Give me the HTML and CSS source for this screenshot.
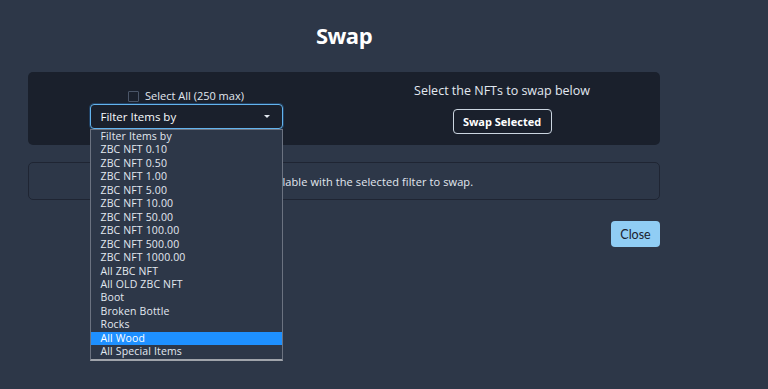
FILE: index.html
```html
<!DOCTYPE html>
<html lang="en">
<head>
    <meta charset="UTF-8">
    <meta name="viewport" content="width=device-width, initial-scale=1.0">
    <title>Swap</title>
    <link rel="stylesheet" href="styles.css">
</head>
<body>
    <div class="modal">
        <h1 class="title">Swap</h1>

        <div class="panel">
            <div class="col">
                <label class="select-all">
                    <span class="checkbox"></span>
                    Select All (250 max)
                </label>
                <div class="filter">
                    <div class="filter-box">
                        <span>Filter Items by</span>
                        <span class="caret"></span>
                    </div>
                    <ul class="filter-list">
                        <li>Filter Items by</li>
                        <li>ZBC NFT 0.10</li>
                        <li>ZBC NFT 0.50</li>
                        <li>ZBC NFT 1.00</li>
                        <li>ZBC NFT 5.00</li>
                        <li>ZBC NFT 10.00</li>
                        <li>ZBC NFT 50.00</li>
                        <li>ZBC NFT 100.00</li>
                        <li>ZBC NFT 500.00</li>
                        <li>ZBC NFT 1000.00</li>
                        <li>All ZBC NFT</li>
                        <li>All OLD ZBC NFT</li>
                        <li>Boot</li>
                        <li>Broken Bottle</li>
                        <li>Rocks</li>
                        <li class="active">All Wood</li>
                        <li>All Special Items</li>
                    </ul>
                </div>
            </div>
            <div class="col">
                <p class="hint">Select the NFTs to swap below</p>
                <button class="btn-outline">Swap Selected</button>
            </div>
        </div>

        <div class="notice">
            No NFTs available with the selected filter to swap.
        </div>

        <div class="footer">
            <button class="btn-close">Close</button>
        </div>
    </div>
</body>
</html>
```

FILE: styles.css
```css
* {
    margin: 0;
    padding: 0;
    box-sizing: border-box;
}

body {
    font-family: 'Open Sans', 'Noto Sans', sans-serif;
    background: #2d3748;
    color: #e2e8f0;
    min-height: 100vh;
}

.modal {
    width: 632px;
    margin-left: 28px;
    padding-top: 20px;
}

.title {
    text-align: center;
    font-size: 22px;
    font-weight: 700;
    color: #fff;
    line-height: 30px;
    margin-bottom: 22px;
    letter-spacing: -0.5px;
}

.panel {
    background: #1a202c;
    border-radius: 5px;
    display: grid;
    grid-template-columns: 1fr 1fr;
    align-items: center;
    height: 73px;
}

.col {
    display: flex;
    flex-direction: column;
    align-items: center;
}

.select-all {
    display: flex;
    align-items: center;
    gap: 6px;
    font-size: 11px;
    line-height: 16px;
    color: #e2e8f0;
}

.checkbox {
    width: 11px;
    height: 11px;
    border: 1px solid #4a5568;
    border-radius: 1px;
}

.filter {
    position: relative;
    width: 193px;
}

.filter-box {
    height: 25px;
    border: 1px solid #63b3ed;
    border-radius: 4px;
    box-shadow: 0 0 0 1px #3182ce55;
    display: flex;
    align-items: center;
    justify-content: space-between;
    padding: 0 11px 0 10px;
    font-size: 11.5px;
    color: #f7fafc;
}

.caret {
    width: 0;
    height: 0;
    border-left: 3px solid transparent;
    border-right: 3px solid transparent;
    border-top: 3px solid #e2e8f0;
    margin-right: 1px;
}

.filter-list {
    position: absolute;
    top: 25px;
    left: 0;
    width: 193px;
    list-style: none;
    background: #2d3748;
    border: 1px solid #6b7280;
    border-bottom: 2px solid #a0a4ab;
    z-index: 5;
}

.filter-list li {
    font-size: 10.5px;
    letter-spacing: 0.15px;
    line-height: 13.45px;
    padding-left: 10px;
    color: #e2e8f0;
}

.filter-list li.active {
    background: #1e90ff;
    color: #fff;
}

.hint {
    font-size: 12.5px;
    line-height: 16px;
    color: #e2e8f0;
}

.btn-outline {
    margin-top: 10px;
    width: 99px;
    height: 25px;
    background: transparent;
    border: 1px solid #cbd5e0;
    border-radius: 4px;
    color: #fff;
    font-family: inherit;
    font-size: 11px;
    font-weight: 700;
}

.notice {
    margin-top: 17px;
    height: 38px;
    border: 1px solid #1f2533;
    border-radius: 5px;
    display: flex;
    align-items: center;
    justify-content: center;
    font-size: 11px;
    letter-spacing: 0.1px;
    color: #e2e8f0;
}

.footer {
    display: flex;
    justify-content: flex-end;
    margin-top: 21px;
}

.btn-close {
    width: 49px;
    height: 26px;
    background: #90cdf4;
    border: none;
    border-radius: 4px;
    color: #1a202c;
    font-family: 'Lato', sans-serif;
    font-size: 12.5px;
}
```
